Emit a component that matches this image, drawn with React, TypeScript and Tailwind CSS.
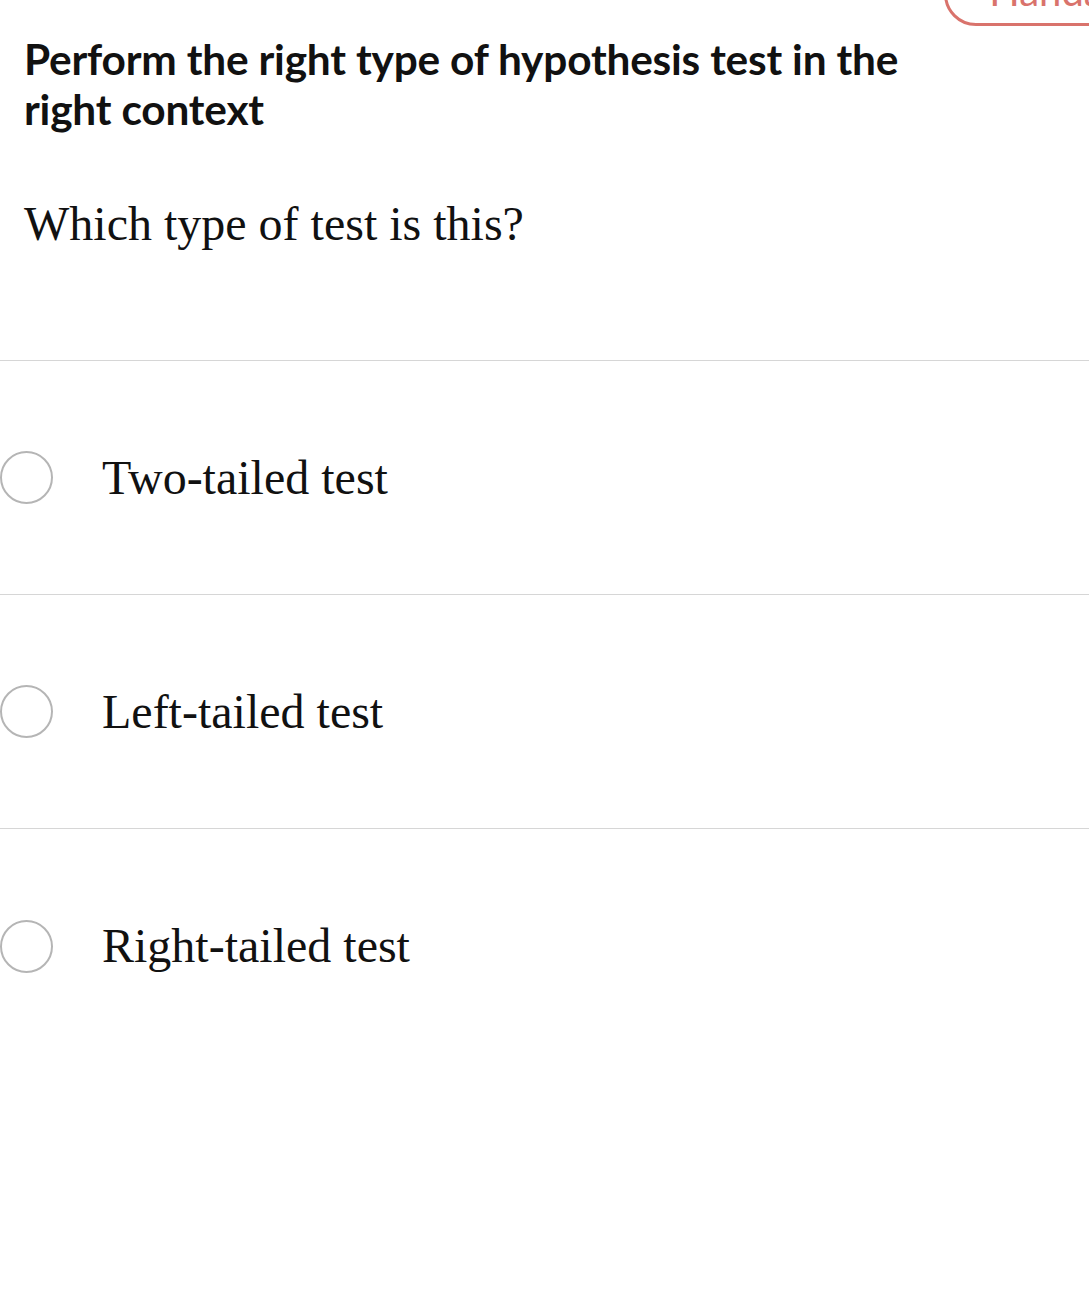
import React from 'react';

const options = ['Two-tailed test', 'Left-tailed test', 'Right-tailed test'];

function Radio() {
  return (
    <span className="block h-[53px] w-[53px] shrink-0 rounded-full border-2 border-[#b5b5b5] bg-white" />
  );
}

export default function App() {
  return (
    <div className="min-h-[1301px] w-full overflow-hidden bg-white text-[#111]">
      <div className="flex justify-end">
        <div className="-mt-[38px] -mr-[60px] flex h-[64px] w-[205px] items-end justify-center rounded-full border-[3px] border-[#d9736c] pb-[12px] font-['Lato','Noto_Sans',sans-serif] text-[40px] leading-none text-[#d9736c]">
          Handa
        </div>
      </div>

      <h1 className="mt-[8px] px-[24px] font-['Lato','Noto_Sans',sans-serif] text-[42.4px] font-bold leading-[50px] tracking-[-0.2px]">
        Perform the right type of hypothesis test in the
        <br />
        right context
      </h1>

      <p className="mt-[62px] px-[24px] font-['Liberation_Serif','Times_New_Roman',serif] text-[48px] leading-[56px]">
        Which type of test is this?
      </p>

      <div className="mt-[108px] border-t border-[#d6d6d6]">
        {options.map((o, i) => (
          <div
            key={o}
            className={
              i < options.length - 1
                ? 'flex h-[234px] items-center gap-[49px] border-b border-[#d6d6d6]'
                : 'flex h-[234px] items-center gap-[49px]'
            }
          >
            <Radio />
            <span className="font-['Liberation_Serif','Times_New_Roman',serif] text-[48px] leading-none">{o}</span>
          </div>
        ))}
      </div>
    </div>
  );
}
